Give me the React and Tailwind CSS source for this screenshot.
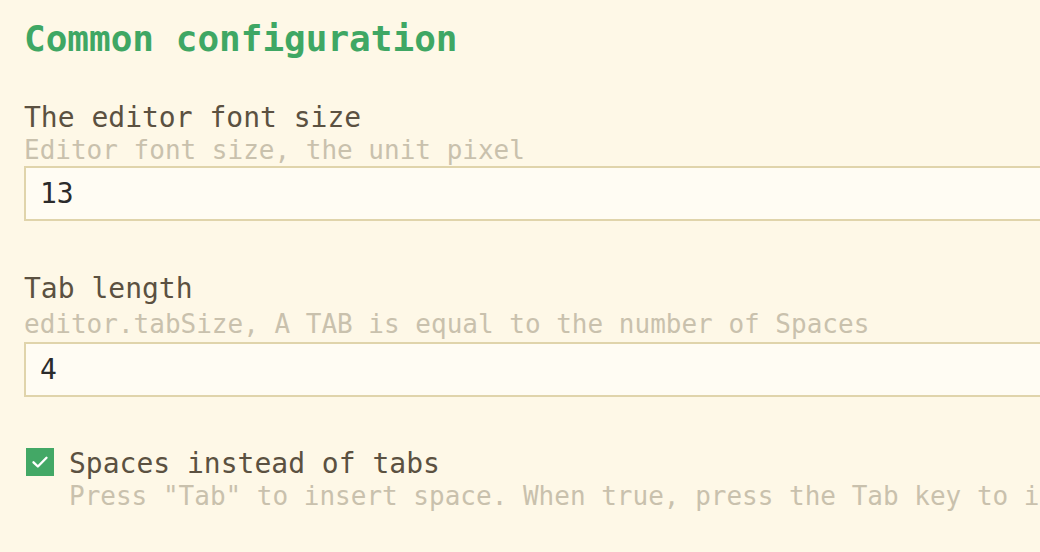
import { useState } from 'react';

const mono = { fontFamily: '"DejaVu Sans Mono", "Liberation Mono", monospace' };

function Field({ label, desc, value, className = '', descClass = '', inputClass = '' }) {
  const [val, setVal] = useState(value);
  return (
    <div className={className}>
      <div className="text-[28px] leading-[32px] text-[#5b5141]">{label}</div>
      <div className={`text-[26px] leading-[30px] text-[#c9c1ad] whitespace-nowrap ${descClass}`}>{desc}</div>
      <input
        value={val}
        onChange={e => setVal(e.target.value)}
        className={`block w-[1100px] h-[55px] border-2 border-[#e0d4ab] bg-[#fffcf3] pl-[14px] text-[28px] text-[#2b2b2b] outline-none ${inputClass}`}
        style={mono}
      />
    </div>
  );
}

export default function App() {
  const [spaces, setSpaces] = useState(true);
  return (
    <div className="w-[1040px] h-[552px] overflow-hidden bg-[#fef8e7] pl-[24px] pt-[17px]" style={mono}>
      <h1 className="text-[36px] leading-[44px] font-bold text-[#3fa764] whitespace-nowrap">Common configuration</h1>

      <Field
        className="mt-[41px]"
        label="The editor font size"
        desc="Editor font size, the unit pixel"
        value="13"
        descClass="mt-[1px]"
        inputClass="mt-[1px]"
      />

      <Field
        className="mt-[52px]"
        label="Tab length"
        desc="editor.tabSize, A TAB is equal to the number of Spaces"
        value="4"
        descClass="mt-[4px]"
        inputClass="mt-[3px]"
      />

      <div className="mt-[51px] flex items-start gap-[15px] pl-[2px]">
        <button
          onClick={() => setSpaces(!spaces)}
          className={`w-[28px] h-[28px] shrink-0 flex items-center justify-center ${spaces ? 'bg-[#43a866]' : 'bg-[#fffcf3] border-2 border-[#e0d4ab]'}`}
        >
          {spaces && (
            <svg width="20" height="20" viewBox="0 0 16 16" fill="none">
              <path d="M2.8 8.3 L6.3 11.6 L13.2 4.6" stroke="#fff" strokeWidth="1.9" strokeLinecap="round" strokeLinejoin="round" />
            </svg>
          )}
        </button>
        <div>
          <div className="text-[28px] leading-[32px] text-[#5b5141] whitespace-nowrap">Spaces instead of tabs</div>
          <div className="mt-[1px] text-[26px] leading-[30px] text-[#c9c1ad] whitespace-nowrap">
            Press "Tab" to insert space. When true, press the Tab key to insert spaces
          </div>
        </div>
      </div>
    </div>
  );
}
